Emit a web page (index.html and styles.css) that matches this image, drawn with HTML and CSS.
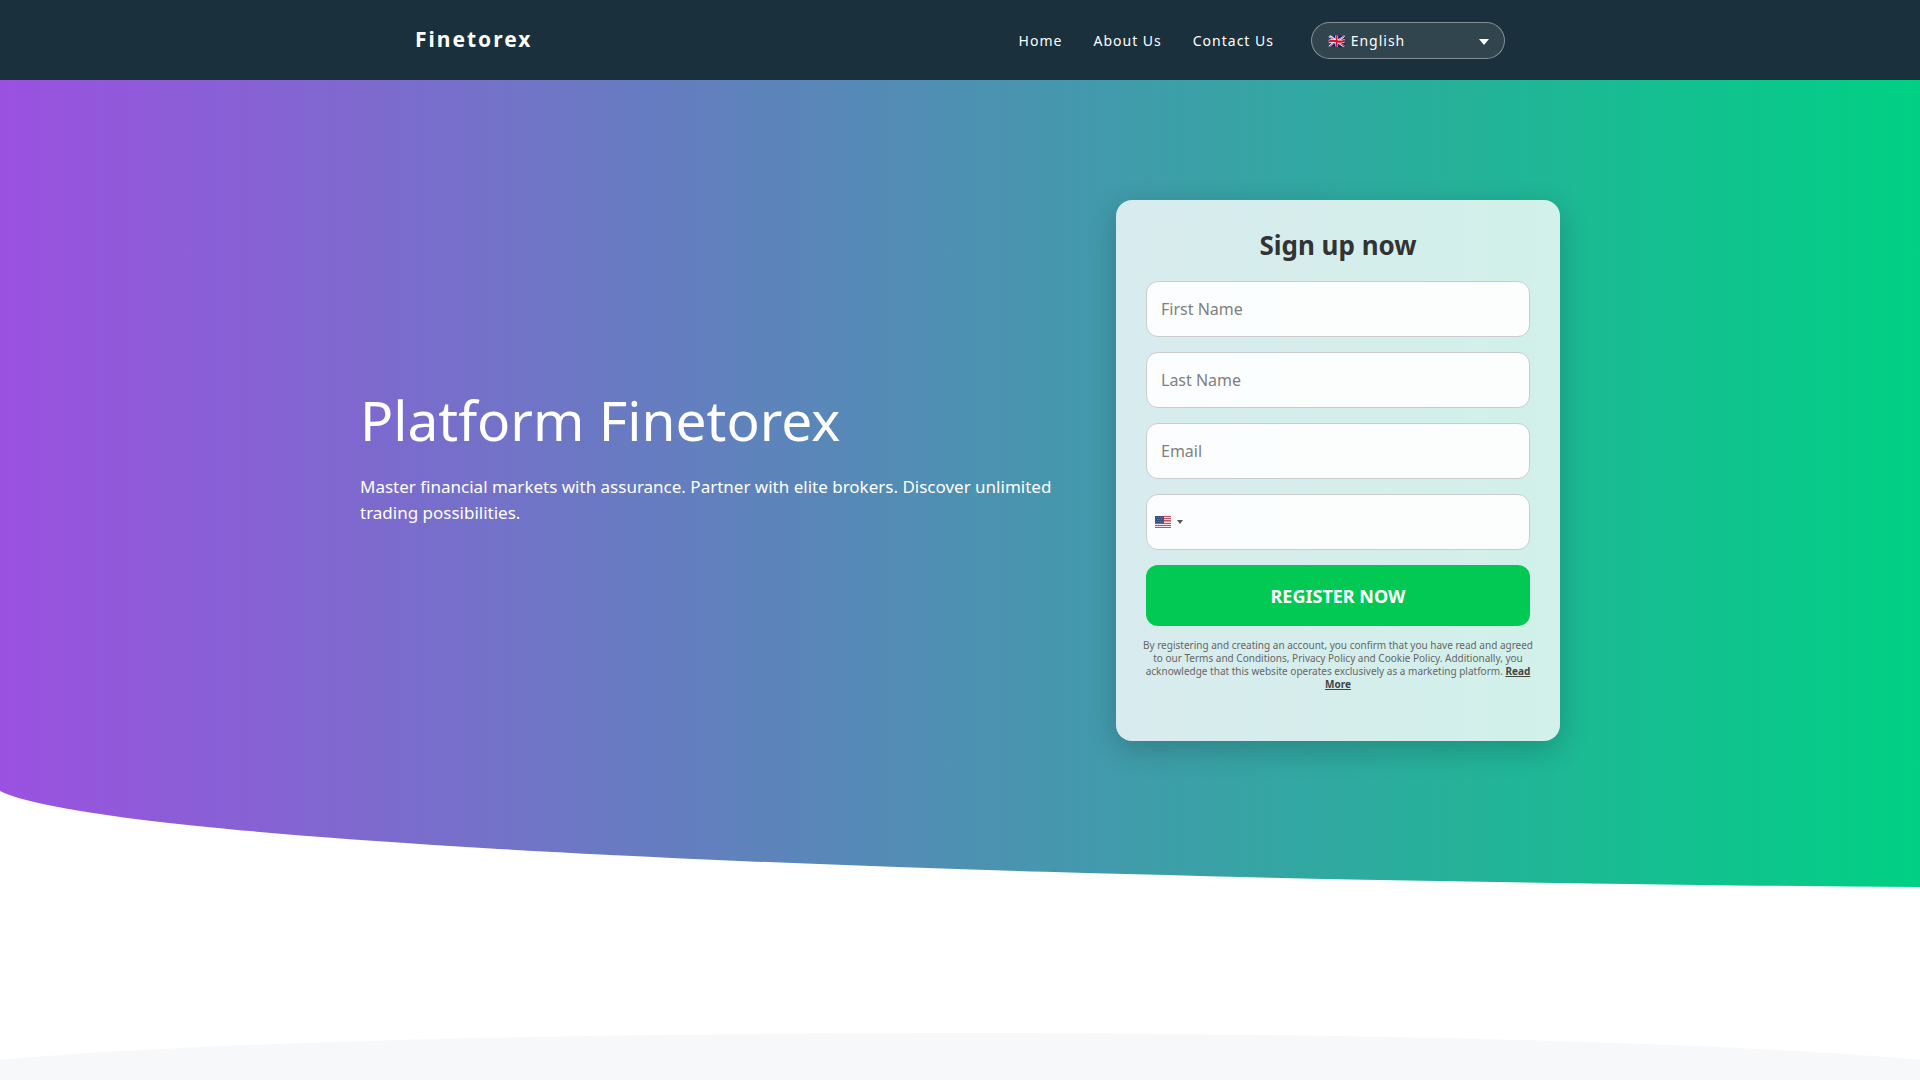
FILE: index.html
```html
<!DOCTYPE html>
<html lang="en">
<head>
    <meta charset="UTF-8">
    <meta name="viewport" content="width=device-width, initial-scale=1.0">
    <title>Finetorex</title>
    <link rel="stylesheet" href="styles.css">
</head>
<body>

    <!-- Header -->
    <header class="header">
        <div class="header-inner">
            <a class="logo" href="#">Finetorex</a>
            <nav class="nav">
                <a href="#">Home</a>
                <a href="#about">About Us</a>
                <a href="#contact">Contact Us</a>
                <select class="lang-select" aria-label="Language">
                    <option selected>🇬🇧 English</option>
                    <option>🇩🇪 Deutsch</option>
                    <option>🇫🇷 Français</option>
                </select>
            </nav>
        </div>
    </header>

    <!-- Hero -->
    <section class="hero">
        <div class="hero-inner">
            <div class="hero-text">
                <h1>Platform Finetorex</h1>
                <p>Master financial markets with assurance. Partner with elite brokers. Discover unlimited trading possibilities.</p>
            </div>

            <form class="signup">
                <h2>Sign up now</h2>
                <input class="field" type="text" name="first_name" placeholder="First Name" aria-label="First Name">
                <input class="field" type="text" name="last_name" placeholder="Last Name" aria-label="Last Name">
                <input class="field" type="email" name="email" placeholder="Email" aria-label="Email">
                <div class="field phone">
                    <button type="button" class="country" aria-label="Country: United States">
                        <svg class="flag" viewBox="0 0 16 12" aria-hidden="true">
                            <rect width="16" height="12" fill="#f3e4e6"/>
                            <path d="M0 .5h16M0 2.5h16M0 4.5h16M0 7.5h16M0 9.5h16M0 11.5h16" stroke="#c9505e"/>
                            <path d="M9 5.5h7" stroke="#dda0a8"/>
                            <rect width="9" height="7" fill="#3b4f80"/>
                            <path d="M1 1.5h7M2 3.5h6M1 5.5h7" stroke="#66769f" stroke-dasharray="1 1"/>
                        </svg>
                        <span class="arrow"></span>
                    </button>
                    <input type="tel" name="phone" aria-label="Phone">
                </div>
                <button class="register" type="submit">REGISTER NOW</button>
                <p class="terms">By registering and creating an account, you confirm that you have read and agreed to our Terms and Conditions, Privacy Policy and Cookie Policy. Additionally, you acknowledge that this website operates exclusively as a marketing platform. <a href="#">Read More</a></p>
            </form>
        </div>
        <svg class="curve" viewBox="0 0 1920 96" preserveAspectRatio="none" aria-hidden="true">
            <path d="M0 0A2240 107 0 0 0 1920 96V97H0Z" fill="#fff"/>
        </svg>
    </section>

    <!-- Next section -->
    <section class="about" id="about"></section>

</body>
</html>
```
FILE: styles.css
```css
* {
    box-sizing: border-box;
}
body {
    display: flex;
    flex-direction: column;
    min-height: 100vh;
    margin: 0;
    font-family: "Noto Sans", sans-serif;
    font-size: 16px;
    color: #333;
    background: #fff;
    overflow-x: hidden;
}

/* Header */
.header {
    background: #1a303c;
}
.header-inner {
    display: flex;
    align-items: center;
    justify-content: space-between;
    max-width: 1130px;
    min-height: 80px;
    margin: 0 auto;
    padding: 0 20px;
}
.logo {
    padding-bottom: 2px;
    color: #fff;
    font-size: 21px;
    font-weight: 700;
    letter-spacing: 2px;
    text-decoration: none;
}
.nav {
    display: flex;
    align-items: center;
    gap: 31px;
}
.nav a {
    color: #fff;
    font-size: 14px;
    letter-spacing: 1px;
    text-decoration: none;
}
.lang-select {
    appearance: none;
    width: 194px;
    margin-left: 6px;
    padding: 8px 16px;
    border: 1px solid rgba(255, 255, 255, 0.4);
    border-radius: 20px;
    color: #fff;
    font-family: inherit;
    font-size: 14px;
    letter-spacing: 1px;
    background: rgba(255, 255, 255, 0.1) url("data:image/svg+xml,%3Csvg xmlns='http://www.w3.org/2000/svg' viewBox='0 0 10 6'%3E%3Cpath d='M0 0h10L5 6z' fill='%23fff'/%3E%3C/svg%3E") no-repeat right 15px top 16px / 10px 6px;
    cursor: pointer;
}
.lang-select option {
    color: #333;
}

/* Hero */
.hero {
    background: linear-gradient(90deg, #9b51e0, #00d084);
}
.hero-inner {
    display: flex;
    align-items: center;
    justify-content: space-between;
    gap: 40px;
    max-width: 1240px;
    margin: 0 auto;
    padding: 120px 20px 50px;
}
.hero-text {
    max-width: 700px;
    padding-bottom: 32px;
    color: #fff;
}
.hero-text h1 {
    margin: 0 0 18px;
    font-size: 55px;
    font-weight: 400;
    line-height: 72px;
}
.hero-text p {
    margin: 0;
    font-size: 17px;
    line-height: 26px;
}
.curve {
    display: block;
    width: 100%;
    height: 96px;
}

/* Sign up form */
.signup {
    display: flex;
    flex-direction: column;
    gap: 15px;
    flex: 0 0 444px;
    padding: 26px 30px 50px;
    border-radius: 16px;
    background: rgba(255, 255, 255, 0.8);
    box-shadow: 0 8px 30px rgba(0, 0, 0, 0.2);
}
.signup h2 {
    margin: 0 0 2px;
    color: #333;
    font-size: 26px;
    line-height: 38px;
    text-align: center;
}
.field {
    width: 100%;
    height: 56px;
    padding: 0 14px;
    border: 1px solid #ccc;
    border-radius: 12px;
    font-family: inherit;
    font-size: 16px;
    background: rgba(255, 255, 255, 0.9);
}
.field::placeholder {
    color: #808080;
}
.phone {
    display: flex;
    align-items: center;
    padding: 0;
}
.phone input {
    flex: 1;
    min-width: 0;
    height: 100%;
    border: 0;
    outline: none;
    font: inherit;
    background: none;
}
.country {
    display: flex;
    align-items: center;
    gap: 6px;
    padding: 0 8px;
    border: 0;
    background: none;
    cursor: pointer;
}
.flag {
    width: 16px;
    height: 12px;
}
.arrow {
    border: 3px solid transparent;
    border-top: 4px solid #555;
    border-bottom: 0;
}
.register {
    height: 61px;
    border: 0;
    border-radius: 12px;
    color: #fff;
    font-family: inherit;
    font-size: 18px;
    font-weight: 700;
    background: #02c953;
    cursor: pointer;
}
.terms {
    margin: -2px -4px 0;
    color: #666;
    font-size: 10px;
    line-height: 13px;
    text-align: center;
}
.terms a {
    color: #444;
    font-weight: 700;
}

/* Next section */
.about {
    flex: 1 0 46px;
    width: 110%;
    margin: 146px 0 0 -5%;
    border-radius: 50% 50% 0 0 / 46px 46px 0 0;
    background: #f7f8fa;
}
```
